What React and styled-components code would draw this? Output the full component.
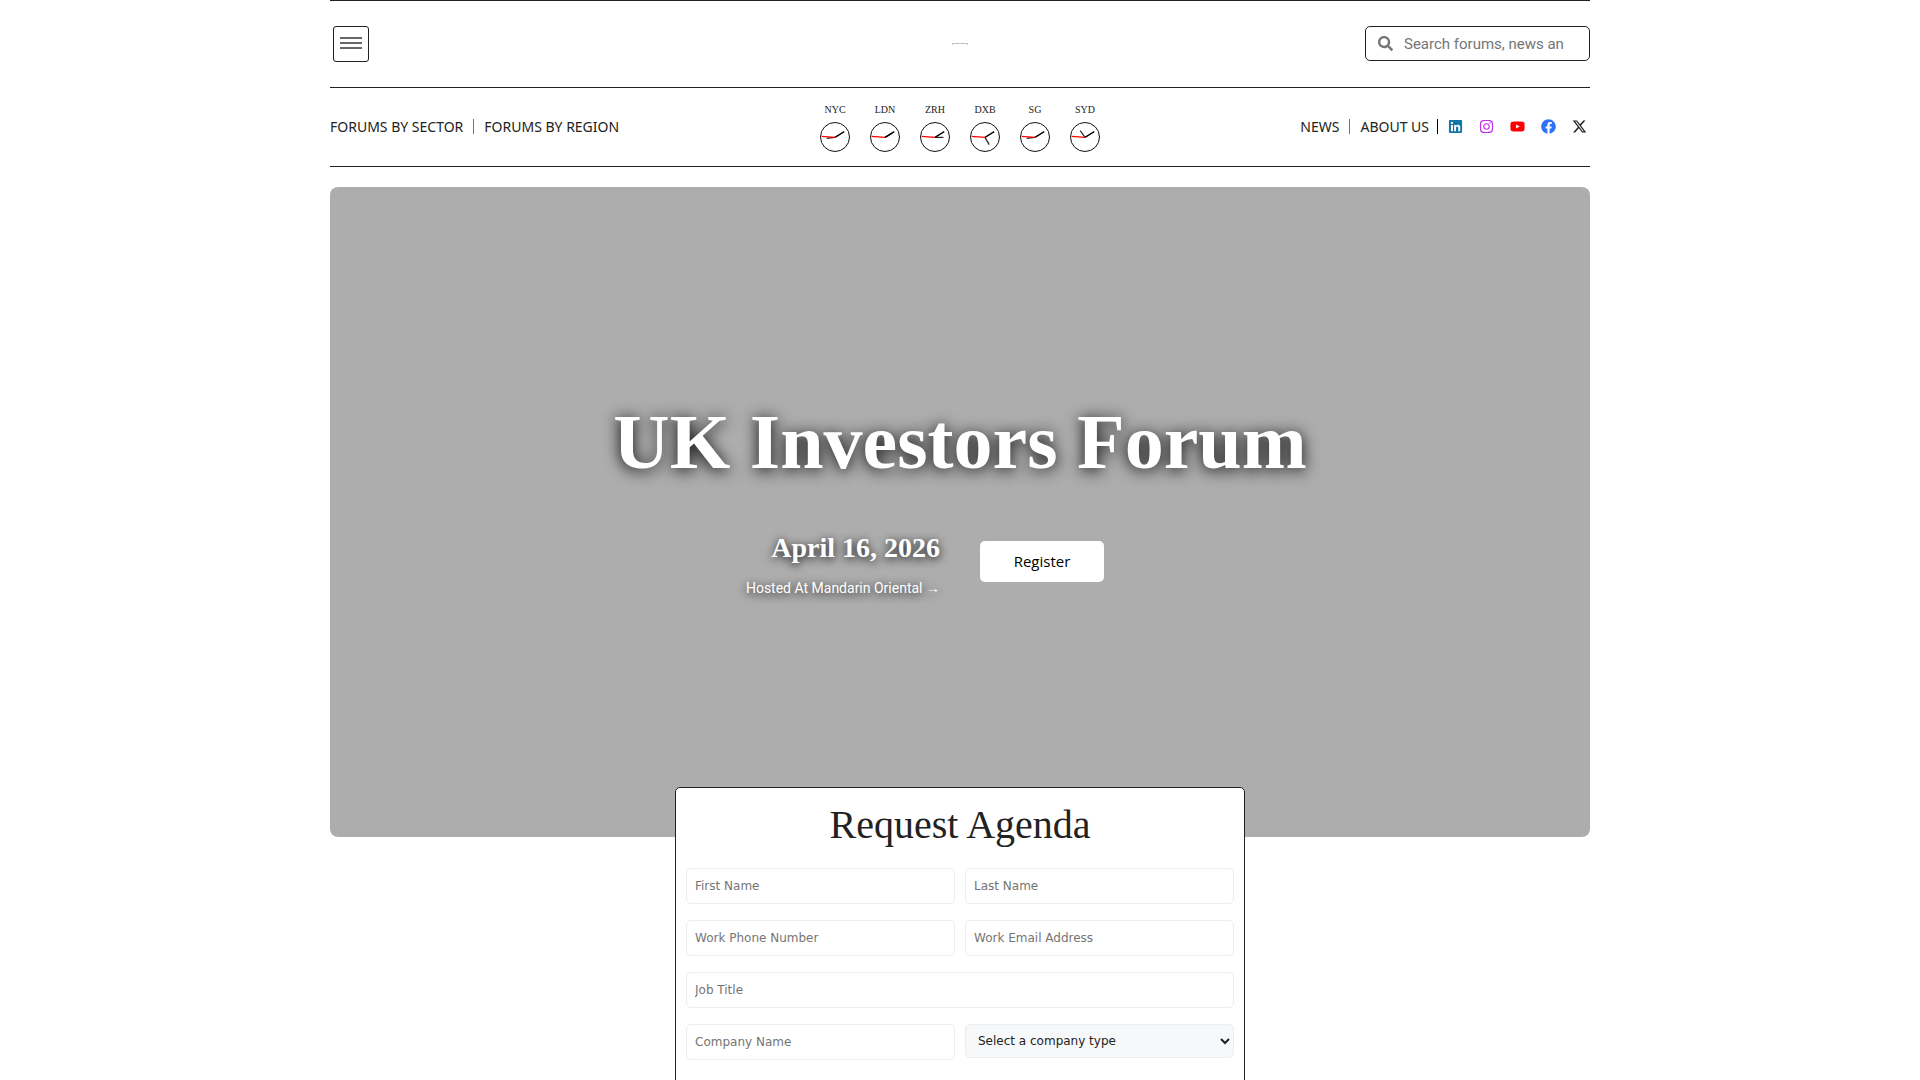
import React from "react";
import styled, { createGlobalStyle } from "styled-components";
import { FaSearch, FaLinkedin, FaInstagram, FaYoutube, FaFacebook } from "react-icons/fa";
import { FaXTwitter } from "react-icons/fa6";

const GlobalStyle = createGlobalStyle`
  * {
    box-sizing: border-box;
  }
  html {
    scrollbar-width: none;
  }
  body {
    margin: 0;
    background: #fff;
    color: #222;
    font-family: "Open Sans", sans-serif;
  }
`;

const Page = styled.div`
  max-width: 1260px;
  margin: 0 auto;
`;

//Header

const TopBar = styled.div`
  display: grid;
  grid-template-columns: 1fr auto 1fr;
  align-items: center;
  height: 88px;
  padding-bottom: 1px;
  border-top: 1px solid #222;
  border-bottom: 1px solid #222;
`;

const MenuButton = styled.button`
  display: flex;
  justify-content: center;
  width: 36px;
  height: 36px;
  margin-left: 3px;
  padding: 10px 0 0;
  border: 1px solid #222;
  border-radius: 3px;
  background: #fff;
  cursor: pointer;
`;

const Logo = styled.a`
  width: 16px;
  height: 2px;
  border: 1px solid #c0c0c0;
  border-bottom: none;
`;

const SearchBox = styled.label`
  justify-self: end;
  display: flex;
  align-items: center;
  gap: 11px;
  width: 225px;
  height: 35px;
  padding: 0 25px 0 12px;
  border: 1px solid #222;
  border-radius: 5px;
  color: #757575;
  font-size: 15px;
`;

const SearchInput = styled.input`
  flex: 1;
  min-width: 0;
  padding: 0;
  border: none;
  outline: none;
  background: none;
  font-family: Roboto, sans-serif;
  font-size: 15px;

  &::placeholder {
    color: #757575;
  }
  &::-webkit-search-cancel-button {
    display: none;
  }
`;

const NavBar = styled.div`
  display: grid;
  grid-template-columns: 1fr auto 1fr;
  align-items: center;
  height: 79px;
  border-bottom: 1px solid #222;
`;

const Nav = styled.nav`
  display: flex;
  align-items: center;
  justify-content: ${(props) => (props.$right ? "flex-end" : "flex-start")};
  padding-bottom: 1px;
`;

const NavLink = styled.a`
  color: #222;
  font-family: "Noto Sans", sans-serif;
  font-size: 14px;
  line-height: 20px;
  text-decoration: none;
`;

const Divider = styled.span`
  width: 1px;
  height: 15px;
  margin: 0 10px;
  background: #777;
`;

const DarkDivider = styled(Divider)`
  margin-left: 8px;
  background: #000;
`;

const Clocks = styled.div`
  display: flex;
  gap: 20px;
  padding-top: 2px;
`;

const Clock = styled.div`
  display: flex;
  flex-direction: column;
  align-items: center;
  gap: 6px;
  width: 30px;
  font-family: "Liberation Serif", serif;
  font-size: 10px;
  line-height: 12px;
`;

const Socials = styled.div`
  display: flex;
  gap: 16px;
  padding-right: 3px;
`;

const SocialLink = styled.a`
  display: flex;
  color: ${(props) => props.$color};
  font-size: 15px;
`;

//Hero

const Hero = styled.section`
  height: 650px;
  margin-top: 20px;
  padding-top: 210px;
  border-radius: 8px;
  background: #adadad;
  color: #fff;
`;

const HeroTitle = styled.h1`
  margin: 0;
  font-family: "Liberation Serif", serif;
  font-size: 78px;
  font-weight: 700;
  line-height: 90px;
  text-align: center;
  text-shadow: 0 2px 16px #000;
`;

const HeroInfo = styled.div`
  display: grid;
  grid-template-columns: 1fr 1fr;
  align-items: center;
  gap: 40px;
  margin-top: 37px;
`;

const EventInfo = styled.div`
  justify-self: end;
  padding-top: 4px;
  text-align: right;
`;

const EventDate = styled.h2`
  margin: 0;
  font-family: "Liberation Serif", serif;
  font-size: 28px;
  line-height: 40px;
  text-shadow: 0 2px 10px #000;
`;

const Venue = styled.a`
  display: block;
  margin-top: 10px;
  color: #fff;
  font-family: Roboto, sans-serif;
  font-size: 14px;
  line-height: 20px;
  text-decoration: none;
  text-shadow: 0 2px 10px #000;
`;

const RegisterButton = styled.button`
  justify-self: start;
  width: 124px;
  height: 41px;
  border: none;
  border-radius: 5px;
  background: #fff;
  color: #000;
  font-family: "Open Sans", sans-serif;
  font-size: 15px;
  font-weight: 500;
  cursor: pointer;
`;

//Agenda form

const AgendaForm = styled.form`
  position: relative;
  display: grid;
  grid-template-columns: 1fr 1fr;
  gap: 16px 10px;
  max-width: 570px;
  margin: -50px auto 0;
  padding: 10px 10px 40px;
  border: 1px solid #222;
  border-radius: 5px;
  background: #fff;
`;

const FormTitle = styled.h2`
  grid-column: 1 / -1;
  margin: 0;
  font-family: "Liberation Serif", serif;
  font-size: 40px;
  font-weight: 400;
  line-height: 54px;
  text-align: center;
`;

const Field = styled.input`
  grid-column: ${(props) => (props.$wide ? "1 / -1" : "auto")};
  width: 100%;
  height: 36px;
  padding: 0 8px;
  border: 1px solid #ededed;
  border-radius: 5px;
  background: #fff;
  font-family: "DejaVu Sans", sans-serif;
  font-size: 12px;

  &::placeholder {
    color: #757575;
  }
`;

const Select = styled.select`
  width: 100%;
  height: 34px;
  padding: 0 0 0 8px;
  border: 1px solid #ededed;
  border-radius: 5px;
  background: #f7f8fa;
  color: #222;
  font-family: "DejaVu Sans", sans-serif;
  font-size: 12px;
`;

// hour is the angle of the hour hand, in degrees
const cities = [
  { name: "NYC", hour: 263 },
  { name: "LDN", hour: 60 },
  { name: "ZRH", hour: 90 },
  { name: "DXB", hour: 150 },
  { name: "SG", hour: 263 },
  { name: "SYD", hour: 325 },
];

const socials = [
  { name: "LinkedIn", color: "#0e76a8", Icon: FaLinkedin },
  { name: "Instagram", color: "#c32aea", Icon: FaInstagram },
  { name: "YouTube", color: "#ff0000", Icon: FaYoutube },
  { name: "Facebook", color: "#316ff6", Icon: FaFacebook },
  { name: "X", color: "#222", Icon: FaXTwitter },
];

function ClockFace({ hour }) {
  return (
    <svg width="30" height="30" viewBox="0 0 30 30" fill="none">
      <circle cx="15" cy="15" r="14.5" fill="#fff" stroke="#111" />
      <line x1="15" y1="15.4" x2="15" y2="7" stroke="#222" strokeWidth="1.2" transform={`rotate(${hour} 15 15.4)`} />
      <line x1="15" y1="15.4" x2="15" y2="4.5" stroke="#000" strokeWidth="1.3" transform="rotate(58 15 15.4)" />
      <line x1="15" y1="15.4" x2="15" y2="2" stroke="#f00" strokeWidth="1.2" transform="rotate(274 15 15.4)" />
    </svg>
  );
}

function Header() {
  return (
    <header>
      <TopBar>
        <MenuButton type="button" aria-label="Menu">
          <svg width="22" height="13" viewBox="0 0 22 13" fill="#444">
            <rect y="0.2" width="22" height="1.6" />
            <rect y="5.2" width="22" height="1.6" />
            <rect y="10.2" width="22" height="1.6" />
          </svg>
        </MenuButton>
        <Logo href="#" aria-label="Home" />
        <SearchBox>
          <FaSearch />
          <SearchInput type="search" aria-label="Search" placeholder="Search forums, news and more" />
        </SearchBox>
      </TopBar>
      <NavBar>
        <Nav>
          <NavLink href="#">FORUMS BY SECTOR</NavLink>
          <Divider />
          <NavLink href="#">FORUMS BY REGION</NavLink>
        </Nav>
        <Clocks>
          {cities.map((city) => (
            <Clock key={city.name}>
              {city.name}
              <ClockFace hour={city.hour} />
            </Clock>
          ))}
        </Clocks>
        <Nav $right>
          <NavLink href="#">NEWS</NavLink>
          <Divider />
          <NavLink href="#">ABOUT US</NavLink>
          <DarkDivider />
          <Socials>
            {socials.map(({ name, color, Icon }) => (
              <SocialLink key={name} href="#" aria-label={name} $color={color}>
                <Icon />
              </SocialLink>
            ))}
          </Socials>
        </Nav>
      </NavBar>
    </header>
  );
}

function App() {
  return (
    <>
      <GlobalStyle />
      <Page>
        <Header />
        <Hero>
          <HeroTitle>UK Investors Forum</HeroTitle>
          <HeroInfo>
            <EventInfo>
              <EventDate>April 16, 2026</EventDate>
              <Venue href="#">Hosted At Mandarin Oriental →</Venue>
            </EventInfo>
            <RegisterButton type="button">Register</RegisterButton>
          </HeroInfo>
        </Hero>
        <AgendaForm>
          <FormTitle>Request Agenda</FormTitle>
          <Field type="text" aria-label="First Name" placeholder="First Name" />
          <Field type="text" aria-label="Last Name" placeholder="Last Name" />
          <Field type="tel" aria-label="Work Phone Number" placeholder="Work Phone Number" />
          <Field type="email" aria-label="Work Email Address" placeholder="Work Email Address" />
          <Field $wide type="text" aria-label="Job Title" placeholder="Job Title" />
          <Field type="text" aria-label="Company Name" placeholder="Company Name" />
          <Select aria-label="Company type" defaultValue="">
            <option value="">Select a company type</option>
          </Select>
        </AgendaForm>
      </Page>
    </>
  );
}

export default App;
